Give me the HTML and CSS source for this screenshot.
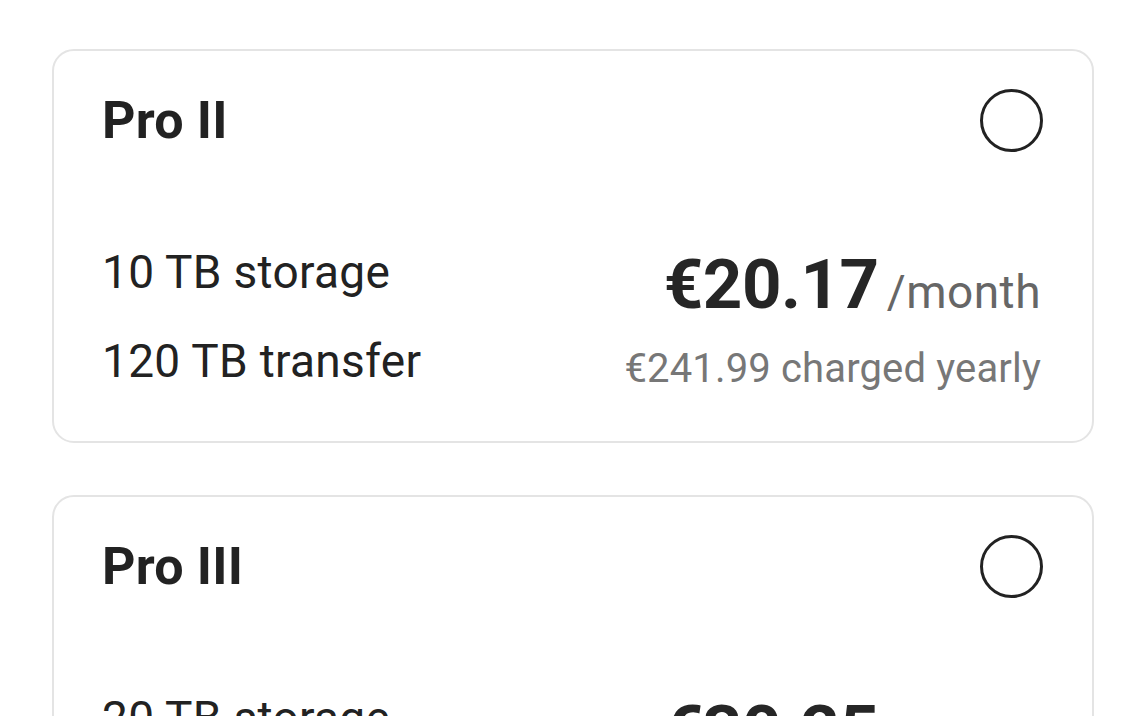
FILE: index.html
```html
<!DOCTYPE html>
<html lang="en">
<head>
    <meta charset="UTF-8">
    <meta name="viewport" content="width=device-width, initial-scale=1.0">
    <title>Choose a plan</title>
    <link rel="stylesheet" href="styles.css">
</head>
<body>
    <div class="plans">
        <!-- Pro II -->
        <div class="plan">
            <div class="plan-head">
                <h2 class="plan-name">Pro II</h2>
                <span class="radio"></span>
            </div>
            <div class="plan-body">
                <div class="features">
                    <p>10 TB storage</p>
                    <p>120 TB transfer</p>
                </div>
                <div class="pricing">
                    <p class="price"><span class="amount">€20.17</span><span class="period">/month</span></p>
                    <p class="yearly">€241.99 charged yearly</p>
                </div>
            </div>
        </div>

        <!-- Pro III -->
        <div class="plan">
            <div class="plan-head">
                <h2 class="plan-name">Pro III</h2>
                <span class="radio"></span>
            </div>
            <div class="plan-body">
                <div class="features">
                    <p>20 TB storage</p>
                    <p>240 TB transfer</p>
                </div>
                <div class="pricing">
                    <p class="price"><span class="amount">€30.25</span><span class="period">/month</span></p>
                    <p class="yearly">€362.99 charged yearly</p>
                </div>
            </div>
        </div>
    </div>
</body>
</html>
```

FILE: styles.css
```css
* {
    box-sizing: border-box;
    margin: 0;
    padding: 0;
}

body {
    font-family: Roboto, "Liberation Sans", sans-serif;
    background-color: #fff;
    color: #222;
}

.plans {
    padding: 49px 52px 0;
    display: flex;
    flex-direction: column;
    gap: 52px;
}

.plan {
    border: 2px solid #e4e4e4;
    border-radius: 22px;
    background-color: #fff;
    padding: 37px 51px 48px 48px;
}

.plan-head {
    display: flex;
    justify-content: space-between;
    align-items: center;
    height: 64px;
}

.plan-name {
    font-size: 52px;
    font-weight: 700;
    letter-spacing: 0.2px;
    color: #222;
}

.radio {
    width: 63px;
    height: 63px;
    border: 3px solid #222;
    border-radius: 50%;
    margin-right: -2px;
}

.plan-body {
    display: flex;
    justify-content: space-between;
    align-items: flex-start;
    margin-top: 93px;
}

.features {
    display: flex;
    flex-direction: column;
    gap: 35px;
}

.features p {
    font-size: 46px;
    line-height: 54px;
    letter-spacing: 0.3px;
}

.pricing {
    display: flex;
    flex-direction: column;
    align-items: flex-end;
    gap: 7px;
    margin-top: 5px;
}

.price {
    line-height: 70px;
    white-space: nowrap;
}

.amount {
    font-size: 69px;
    font-weight: 700;
    letter-spacing: -0.5px;
    color: #262626;
}

.period {
    font-size: 46px;
    color: #666;
    margin-left: 8px;
    letter-spacing: 0.5px;
}

.yearly {
    font-size: 40px;
    line-height: 48px;
    color: #777;
    letter-spacing: 0.15px;
}
```
